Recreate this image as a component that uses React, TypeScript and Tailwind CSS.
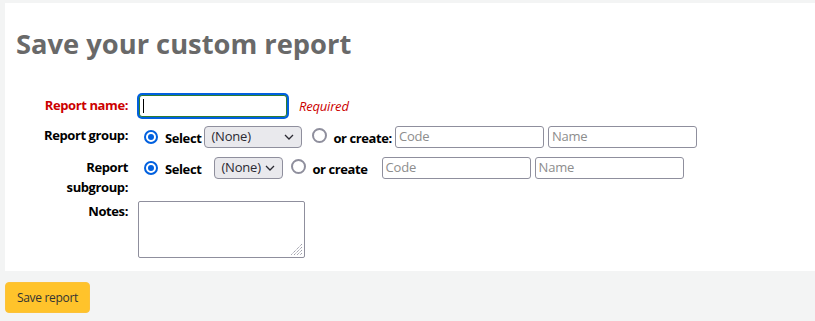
import React from "react";

function Radio({ checked }: { checked?: boolean }) {
  if (checked) {
    return (
      <span className="inline-flex h-[14px] w-[14px] shrink-0 items-center justify-center rounded-full border-2 border-[#0060df] bg-white">
        <span className="h-[6px] w-[6px] rounded-full bg-[#0060df]" />
      </span>
    );
  }
  return <span className="inline-block h-[15px] w-[15px] shrink-0 rounded-full border-2 border-[#8f8f9d] bg-white" />;
}

function Select({ w }: { w: string }) {
  return (
    <div className={`flex h-[22px] items-center justify-between rounded-[4px] border border-[#8f8f9d] bg-[#e9e9ed] pl-[6px] pr-[6px] text-[13px] tracking-[-0.2px] text-[#2b2a33] ${w}`}>
      <span>(None)</span>
      <svg width="10" height="6" viewBox="0 0 10 6" className="mr-[1px]">
        <path d="M1 1 L5 5 L9 1" fill="none" stroke="#2b2a33" strokeWidth="1.3" />
      </svg>
    </div>
  );
}

function TextBox({ ph }: { ph: string }) {
  return (
    <div className="flex h-[22px] w-[149px] items-center rounded-[3px] border border-[#8f8f9d] bg-white pl-[3px] text-[13px] tracking-[-0.2px] text-[#8d8d8d]">
      {ph}
    </div>
  );
}

const bold = "text-[13px] font-bold tracking-[-0.4px] text-black";

export default function App() {
  return (
    <div className="min-h-[321px] w-full bg-[#f3f4f4] pl-[5px] pt-[3px] font-['Open_Sans',sans-serif]">
      <div className="h-[268px] bg-white">
        <h1 className="pl-[11px] pt-[22px] text-[27.3px] font-bold leading-[38px] text-[#696969]">
          Save your custom report
        </h1>
        <div className="mt-[32px]">
          {/* Row 1 */}
          <div className="flex h-[22px] items-start">
            <div className="w-[123px] pt-[1px] text-right text-[13px] font-bold leading-[18px] tracking-[-0.4px] text-[#cc0000]">
              Report name:
            </div>
            <div className="ml-[11px] flex h-[22px] w-[148px] items-center rounded-[3px] border border-[#2e7d32] bg-white pl-[3px] ring-2 ring-[#0060df]">
              <span className="h-[14px] w-[1px] bg-black" />
            </div>
            <span className="ml-[12px] pt-[2px] text-[13px] italic leading-[18px] tracking-[-0.2px] text-[#cc0000]">Required</span>
          </div>
          {/* Row 2 */}
          <div className="mt-[9px] flex h-[22px] items-start">
            <div className={`w-[123px] text-right leading-[18px] ${bold}`}>Report group:</div>
            <div className="ml-[16px] flex h-[22px] items-center">
              <Radio checked />
              <span className={`ml-[7px] mt-[3px] ${bold}`}>Select</span>
              <div className="ml-[3px]">
                <Select w="w-[98px]" />
              </div>
              <span className="ml-[10px]"><Radio /></span>
              <span className={`ml-[6px] mt-[3px] ${bold}`}>or create:</span>
              <div className="ml-[3px]"><TextBox ph="Code" /></div>
              <div className="ml-[4px]"><TextBox ph="Name" /></div>
            </div>
          </div>
          {/* Row 3 */}
          <div className="mt-[9px] flex items-start">
            <div className={`w-[123px] text-right leading-[20px] ${bold}`}>
              <div className="pl-[30px]">Report subgroup:</div>
            </div>
            <div className="ml-[16px] flex h-[22px] items-center">
              <Radio checked />
              <span className={`ml-[7px] mt-[3px] ${bold}`}>Select</span>
              <div className="ml-[13px]">
                <Select w="w-[69px]" />
              </div>
              <span className="ml-[8px]"><Radio /></span>
              <span className={`ml-[6px] mt-[3px] ${bold}`}>or create</span>
              <div className="ml-[14px]"><TextBox ph="Code" /></div>
              <div className="ml-[4px]"><TextBox ph="Name" /></div>
            </div>
          </div>
          {/* Row 4 */}
          <div className="mt-[4px] flex items-start">
            <div className={`w-[123px] pt-[1px] text-right leading-[18px] ${bold}`}>Notes:</div>
            <div className="relative ml-[10px] h-[57px] w-[167px] rounded-[2px] border border-[#8f8f9d] bg-white">
              <svg width="14" height="14" viewBox="0 0 14 14" className="absolute bottom-[1px] right-[1px]">
                <path d="M13 2 L2 13 M13 5 L5 13 M13 8 L8 13 M13 11 L11 13" stroke="#8f8f9d" strokeWidth="1" strokeDasharray="1.2 0.8" fill="none" />
              </svg>
            </div>
          </div>
        </div>
      </div>
      <div className="mt-[11px]">
        <div className="flex h-[31px] w-[85px] items-center justify-center rounded-[4px] border border-[#fcc23a] bg-[#ffc32b] text-[12px] tracking-[-0.3px] text-[#333]">
          Save report
        </div>
      </div>
    </div>
  );
}
